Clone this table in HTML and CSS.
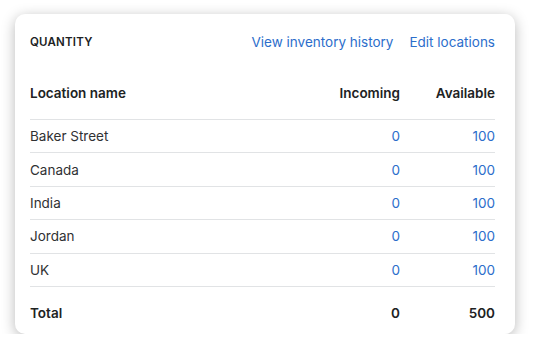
FILE: index.html
```html
<!DOCTYPE html>
<html lang="en">
<head>
  <meta charset="UTF-8">
  <meta name="viewport" content="width=device-width, initial-scale=1">
  <title>Quantity</title>
  <link rel="stylesheet" href="styles.css">
</head>
<body>

  <div class="card">
    <div class="card-header">
      <h2 class="card-title">Quantity</h2>
      <div class="card-actions">
        <a href="#" class="link">View inventory history</a>
        <a href="#" class="link">Edit locations</a>
      </div>
    </div>

    <table class="qty-table">
      <thead>
        <tr>
          <th class="col-name">Location name</th>
          <th class="col-num">Incoming</th>
          <th class="col-num col-avail">Available</th>
        </tr>
      </thead>
      <tbody>
        <tr>
          <td>Baker Street</td>
          <td class="col-num"><a href="#" class="link">0</a></td>
          <td class="col-num"><a href="#" class="link">100</a></td>
        </tr>
        <tr>
          <td>Canada</td>
          <td class="col-num"><a href="#" class="link">0</a></td>
          <td class="col-num"><a href="#" class="link">100</a></td>
        </tr>
        <tr>
          <td>India</td>
          <td class="col-num"><a href="#" class="link">0</a></td>
          <td class="col-num"><a href="#" class="link">100</a></td>
        </tr>
        <tr>
          <td>Jordan</td>
          <td class="col-num"><a href="#" class="link">0</a></td>
          <td class="col-num"><a href="#" class="link">100</a></td>
        </tr>
        <tr>
          <td>UK</td>
          <td class="col-num"><a href="#" class="link">0</a></td>
          <td class="col-num"><a href="#" class="link">100</a></td>
        </tr>
      </tbody>
      <tfoot>
        <tr>
          <td>Total</td>
          <td class="col-num">0</td>
          <td class="col-num">500</td>
        </tr>
      </tfoot>
    </table>
  </div>

</body>
</html>
```

FILE: styles.css
```css
body {
  font-family: Inter, 'Noto Sans', sans-serif;
  font-size: 13.5px;
  color: #303133;
  background-color: #fff;
  margin: 0;
  padding: 14px 0 0 15px;
}

.card {
  box-sizing: border-box;
  width: 500px;
  height: 320px;
  padding: 18px 20px 0 15px;
  background-color: #fff;
  border-radius: 10px;
  box-shadow: 0 3px 14px rgba(0, 0, 0, 0.28);
}

.card-header {
  display: flex;
  justify-content: space-between;
  align-items: center;
  line-height: 20px;
}

.card-title {
  margin: 0;
  font-size: 11.5px;
  font-weight: 600;
  text-transform: uppercase;
  letter-spacing: 0.2px;
  color: #202223;
}

.card-actions {
  display: flex;
  gap: 16px;
}

.link {
  color: #2c6ecb;
  text-decoration: none;
}

.qty-table {
  width: 100%;
  margin-top: 15px;
  border-collapse: collapse;
  line-height: 20px;
}

.qty-table th {
  font-weight: 600;
  text-align: left;
  color: #202223;
  padding: 16px 0;
  border-bottom: 1px solid #e1e3e5;
}

.qty-table td {
  padding: 6.2px 0;
  border-bottom: 1px solid #e1e3e5;
}

.qty-table .col-num {
  text-align: right;
}

.qty-table .col-avail {
  width: 95px;
}

.qty-table tfoot td {
  font-weight: 600;
  color: #202223;
  border-bottom: none;
  padding-top: 16px;
}
```
